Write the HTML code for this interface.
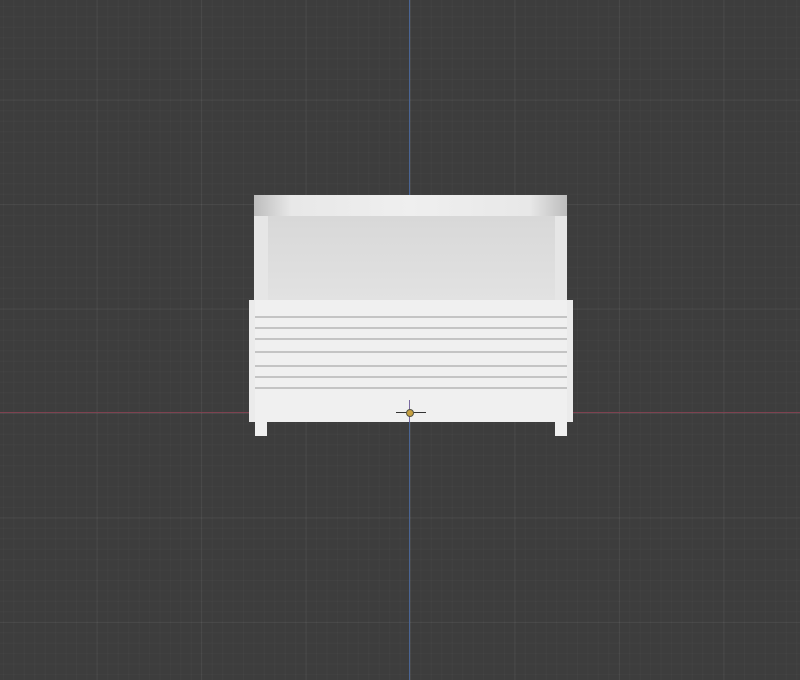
<!DOCTYPE html>
<html><head><style>
html,body{margin:0;padding:0}
body{width:800px;height:680px;overflow:hidden;position:relative;background-color:#3d3d3d;
background-image:
linear-gradient(to right,rgba(255,255,255,0.045) 1px,transparent 1px),
linear-gradient(to bottom,rgba(255,255,255,0.045) 1px,transparent 1px),
linear-gradient(to right,rgba(255,255,255,0.02) 1px,transparent 1px),
linear-gradient(to bottom,rgba(255,255,255,0.02) 1px,transparent 1px);
background-size:104.5px 104.5px,104.5px 104.5px,10.45px 10.45px,10.45px 10.45px;
background-position:410px 413px,410px 413px,410px 413px,410px 413px;}
.a{position:absolute}
</style></head><body>
<div class="a" style="left:0;top:412px;width:800px;height:1px;background:#7e4250"></div>
<div class="a" style="left:409px;top:0;width:1px;height:680px;background:#4a6594"></div>
<div class="a" style="left:254px;top:195px;width:313px;height:21px;background:linear-gradient(to right,#bdbdbd,#e8e8e8 12%,#efefef 50%,#e8e8e8 88%,#bdbdbd);"></div>
<div class="a" style="left:254px;top:216px;width:313px;height:85px;background:#e6e6e6"></div>
<div class="a" style="left:268px;top:216px;width:287px;height:85px;background:linear-gradient(#d8d8d8,#e2e2e2)"></div>
<div class="a" style="left:249px;top:300px;width:324px;height:122px;background:#ebebeb"></div>
<div class="a" style="left:255px;top:300px;width:312px;height:122px;background:#f0f0f0"></div>
<div class="a" style="left:255px;top:316px;width:312px;height:2px;background:#c4c4c4"></div>
<div class="a" style="left:255px;top:327px;width:312px;height:2px;background:#c4c4c4"></div>
<div class="a" style="left:255px;top:338px;width:312px;height:2px;background:#c4c4c4"></div>
<div class="a" style="left:255px;top:351px;width:312px;height:2px;background:#c4c4c4"></div>
<div class="a" style="left:255px;top:365px;width:312px;height:2px;background:#c4c4c4"></div>
<div class="a" style="left:255px;top:376px;width:312px;height:2px;background:#c4c4c4"></div>
<div class="a" style="left:255px;top:387px;width:312px;height:2px;background:#c4c4c4"></div>
<div class="a" style="left:255px;top:421px;width:12px;height:15px;background:#f0f0f0"></div>
<div class="a" style="left:555px;top:421px;width:12px;height:15px;background:#f0f0f0"></div>
<div class="a" style="left:396px;top:412px;width:30px;height:1px;background:#333"></div>
<div class="a" style="left:409px;top:400px;width:1px;height:22px;background:#7a6aa0"></div>
<div class="a" style="left:406px;top:409px;width:6px;height:6px;border-radius:50%;background:#c8a040;border:1px solid #554"></div>
</body></html>
